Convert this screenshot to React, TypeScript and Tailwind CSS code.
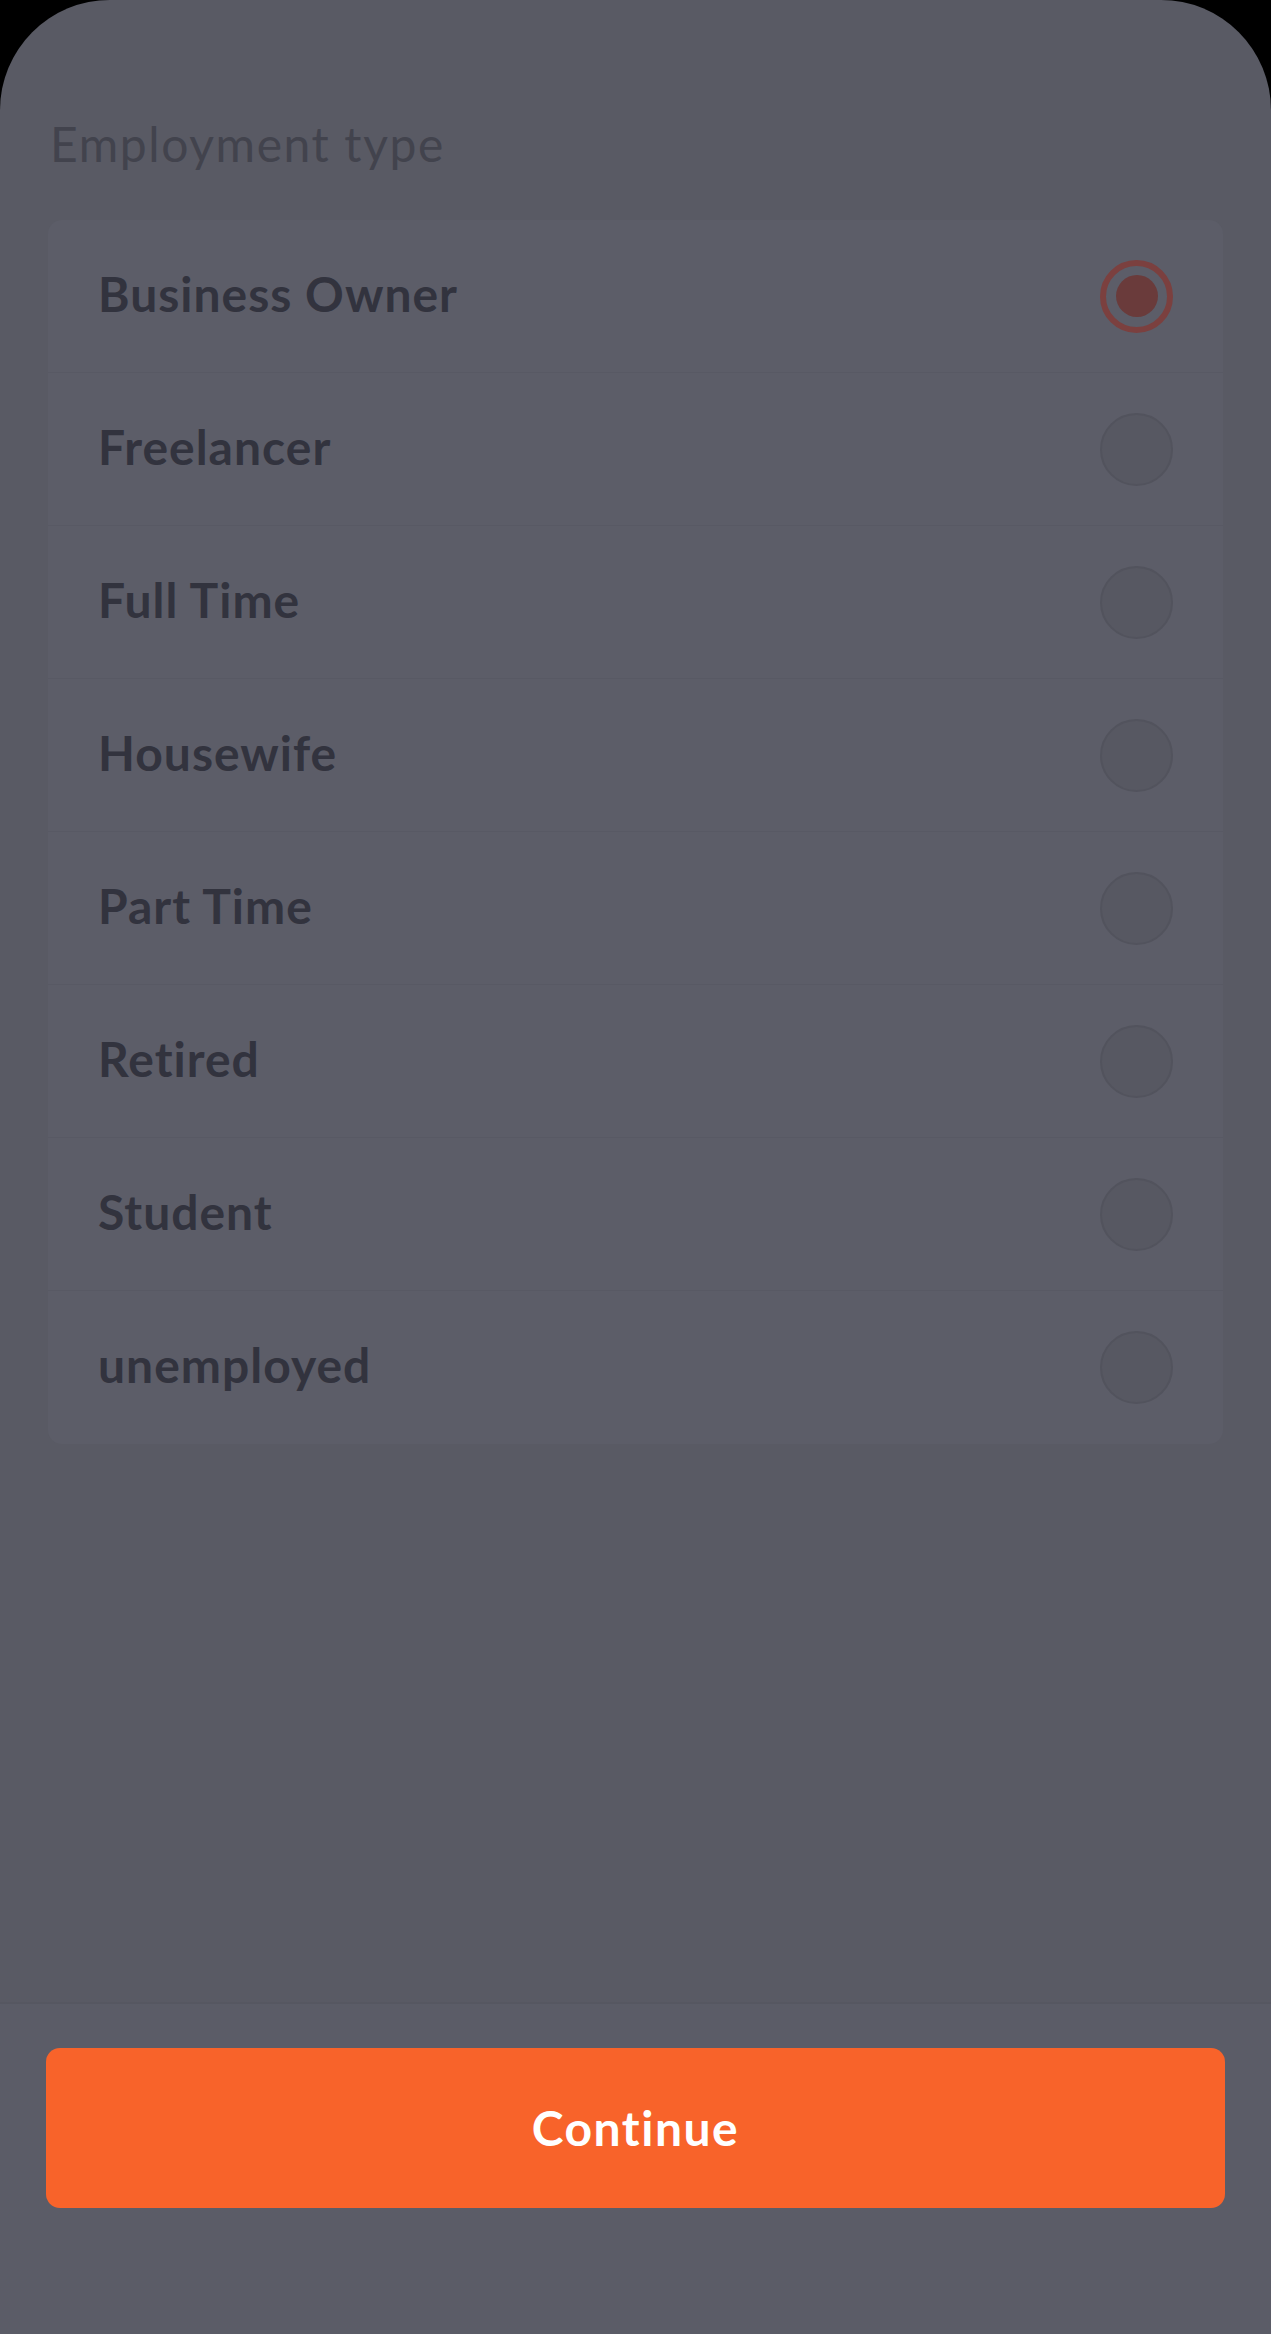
const options = [
  "Business Owner",
  "Freelancer",
  "Full Time",
  "Housewife",
  "Part Time",
  "Retired",
  "Student",
  "unemployed",
];

function Radio({ checked }: { checked: boolean }) {
  if (checked) {
    return (
      <div className="flex h-[73px] w-[73px] items-center justify-center rounded-full border-[6px] border-[#7b403f]">
        <div className="h-[42px] w-[42px] rounded-full bg-[#6a3b3b]" />
      </div>
    );
  }
  return <div className="h-[73px] w-[73px] rounded-full border-2 border-[#52535d] bg-[#575862]" />;
}

export default function App() {
  const selected = "Business Owner";

  return (
    <div className="h-[2334px] w-full bg-black" style={{ fontFamily: "Lato, 'Noto Sans', sans-serif" }}>
      <div className="flex h-full flex-col overflow-hidden rounded-t-[110px] bg-[#595a64]">
        <div className="flex-1 px-[48px] pt-[115px]">
          <h2 className="pl-[2px] text-[48px] leading-[58px] font-normal tracking-[1.6px] text-[#42434d]">
            Employment type
          </h2>
          <div className="mt-[47px] overflow-hidden rounded-[14px] bg-[#5c5d68]">
            {options.map((opt, i) => (
              <div
                key={opt}
                className={
                  "flex h-[153px] items-center justify-between pr-[50px] pl-[50px] " +
                  (i < options.length - 1 ? "border-b border-[#585964]" : "")
                }
              >
                <span className="pb-[5px] text-[48px] font-bold tracking-[1px] text-[#32333e]">{opt}</span>
                <Radio checked={opt === selected} />
              </div>
            ))}
          </div>
        </div>
        <div className="h-[332px] border-t-2 border-[#565761] bg-[#5b5c67] px-[46px] pt-[44px]">
          <button className="flex h-[160px] w-full items-center justify-center rounded-[14px] bg-[#f8632a] text-[48px] font-bold tracking-[1.5px] text-white">
            Continue
          </button>
        </div>
      </div>
    </div>
  );
}
